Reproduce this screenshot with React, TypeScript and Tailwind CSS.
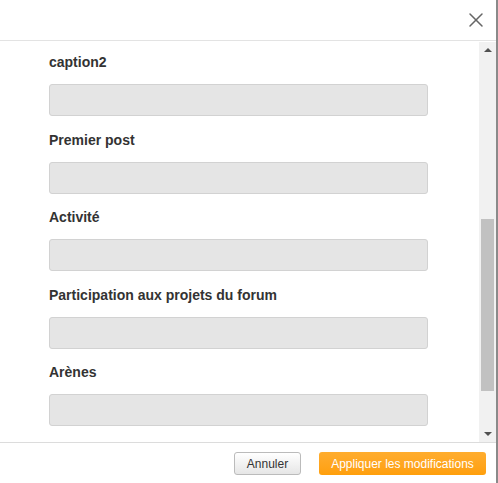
import { X } from 'lucide-react'

const fields = ['caption2', 'Premier post', 'Activité', 'Participation aux projets du forum', 'Arènes']

export default function App() {
  return (
    <div className="w-[498px] h-[483px] flex bg-white overflow-hidden" style={{ fontFamily: '"Liberation Sans", Arial, sans-serif' }}>
      <div className="w-[496px] h-full flex flex-col">
        {/* Header */}
        <div className="h-[41px] shrink-0 flex items-center justify-end pr-[8px] border-b border-[#e3e3e3]">
          <X className="w-[24px] h-[24px] text-[#666]" strokeWidth={1.5} />
        </div>

        {/* Body */}
        <div className="h-[401px] shrink-0 flex border-b border-[#dcdcdc] mt-px">
          <div className="flex-1 pl-[49px] pt-[10px] overflow-hidden">
            {fields.map((f) => (
              <div key={f} className="mb-[13.5px]">
                <div className="text-[14px] leading-[20px] font-bold text-[#333]">{f}</div>
                <div className="mt-[12px] w-[379px] h-[32px] rounded-[3px] bg-[#e5e5e5] border border-[#d2d2d2]" />
              </div>
            ))}
          </div>
          {/* Scrollbar */}
          <div className="w-[17px] h-full bg-[#f1f1f1] flex flex-col items-center justify-between py-[6px]">
            <div className="w-0 h-0 border-l-[4px] border-r-[4px] border-b-[4px] border-l-transparent border-r-transparent border-b-[#505050]" />
            <div className="flex-1 w-full relative">
              <div className="absolute left-[2px] right-[2px] top-[167px] h-[172px] bg-[#c1c1c1]" />
            </div>
            <div className="w-0 h-0 border-l-[4px] border-r-[4px] border-t-[4px] border-l-transparent border-r-transparent border-t-[#505050]" />
          </div>
        </div>

        {/* Footer */}
        <div className="flex-1 flex items-start justify-end gap-[18px] pt-[9px] pr-[10px]">
          <button className="h-[23px] w-[67px] rounded-[3px] border border-[#bbb] bg-gradient-to-b from-white to-[#e6e6e6] text-[12px] text-[#333]">
            Annuler
          </button>
          <button className="h-[23px] w-[167px] rounded-[3px] bg-gradient-to-b from-[#ffad2e] to-[#ff9f0a] text-[12px] text-white">
            Appliquer les modifications
          </button>
        </div>
      </div>
      <div className="w-[2px] h-full bg-[#8a8a8a]" />
    </div>
  )
}
